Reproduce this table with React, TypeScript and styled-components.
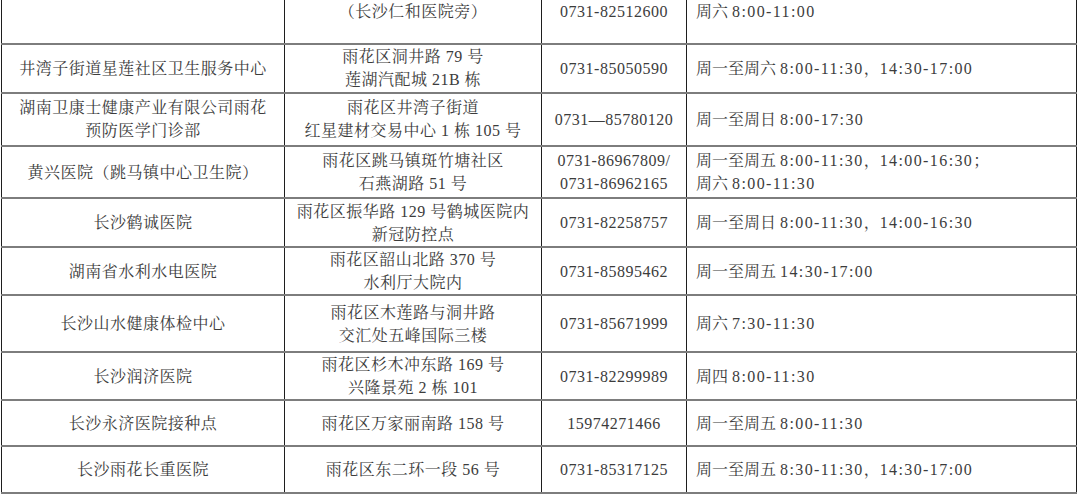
import React from "react";
import styled, { createGlobalStyle } from "styled-components";

const Global = createGlobalStyle`
  html, body { margin: 0; padding: 0; background: #ffffff; }
  body { width: 1080px; height: 496px; overflow: hidden; }
`;

const Page = styled.div`
  width: 1080px;
  height: 496px;
  overflow: hidden;
  background: #ffffff;
  padding-left: 1px;
  box-sizing: border-box;
`;

const Table = styled.table`
  border-collapse: collapse;
  table-layout: fixed;
  width: 1075px;
  font-family: "Liberation Serif", "Noto Serif CJK SC", "Noto Sans CJK SC", serif;
  font-size: 16px;
  line-height: 23px;
  color: #3c3c3c;
`;

const Row = styled.tr<{ $h: number }>`
  height: ${(p) => p.$h}px;
`;

const Cell = styled.td<{ $align?: "left" | "center"; $cut?: boolean; $tight?: boolean }>`
  border-top: ${(p) => (p.$cut ? "none" : "2px solid #7d7d7d")};
  border-bottom: 2px solid #7d7d7d;
  border-left: 1.5px solid #1e1e1e;
  border-right: 1.5px solid #1e1e1e;
  text-align: ${(p) => p.$align ?? "center"};
  vertical-align: ${(p) => (p.$cut ? "top" : "middle")};
  padding: ${(p) => (p.$cut ? "0" : "0")} ${(p) => (p.$align === "left" ? "4px 0 9px" : "2px")};
  letter-spacing: ${(p) => (p.$tight ? "0" : "0.5px")};
  white-space: nowrap;
  overflow: hidden;
`;

const Num = styled.span`
  letter-spacing: 1.4px;
`;

const Line = styled.div``;

type RowData = {
  h: number;
  cut?: boolean;
  name: string[];
  addr: string[];
  phone: string[];
  hours: string[];
};

const rows: RowData[] = [
  { h: 44, cut: true, name: [], addr: ["（长沙仁和医院旁）"], phone: ["0731-82512600"], hours: ["周六 8:00-11:00"] },
  { h: 48.5, name: ["井湾子街道星莲社区卫生服务中心"], addr: ["雨花区洞井路 79 号", "莲湖汽配城 21B 栋"], phone: ["0731-85050590"], hours: ["周一至周六 8:00-11:30，14:30-17:00"] },
  { h: 53.5, name: ["湖南卫康士健康产业有限公司雨花", "预防医学门诊部"], addr: ["雨花区井湾子街道", "红星建材交易中心 1 栋 105 号"], phone: ["0731—85780120"], hours: ["周一至周日 8:00-17:30"] },
  { h: 52, name: ["黄兴医院（跳马镇中心卫生院）"], addr: ["雨花区跳马镇斑竹塘社区", "石燕湖路 51 号"], phone: ["0731-86967809/", "0731-86962165"], hours: ["周一至周五 8:00-11:30，14:00-16:30；", "周六 8:00-11:30"] },
  { h: 49, name: ["长沙鹤诚医院"], addr: ["雨花区振华路 129 号鹤城医院内", "新冠防控点"], phone: ["0731-82258757"], hours: ["周一至周日 8:00-11:30，14:00-16:30"] },
  { h: 47, name: ["湖南省水利水电医院"], addr: ["雨花区韶山北路 370 号", "水利厅大院内"], phone: ["0731-85895462"], hours: ["周一至周五 14:30-17:00"] },
  { h: 57, name: ["长沙山水健康体检中心"], addr: ["雨花区木莲路与洞井路", "交汇处五峰国际三楼"], phone: ["0731-85671999"], hours: ["周六 7:30-11:30"] },
  { h: 48, name: ["长沙润济医院"], addr: ["雨花区杉木冲东路 169 号", "兴隆景苑 2 栋 101"], phone: ["0731-82299989"], hours: ["周四 8:00-11:30"] },
  { h: 46, name: ["长沙永济医院接种点"], addr: ["雨花区万家丽南路 158 号"], phone: ["15974271466"], hours: ["周一至周五 8:00-11:30"] },
  { h: 47, name: ["长沙雨花长重医院"], addr: ["雨花区东二环一段 56 号"], phone: ["0731-85317125"], hours: ["周一至周五 8:30-11:30，14:30-17:00"] },
];

const renderHours = (text: string) =>
  text.split(/([0-9:\-]+)/).map((part, i) =>
    /^[0-9:\-]+$/.test(part) ? <Num key={i}>{part}</Num> : <React.Fragment key={i}>{part}</React.Fragment>
  );

const Lines: React.FC<{ items: string[]; hours?: boolean }> = ({ items, hours }) => (
  <>
    {items.map((t, i) => (
      <Line key={i}>{hours ? renderHours(t) : t}</Line>
    ))}
  </>
);

export default function App() {
  return (
    <Page>
      <Global />
      <Table>
        <colgroup>
          <col style={{ width: 283 }} />
          <col style={{ width: 257 }} />
          <col style={{ width: 145 }} />
          <col style={{ width: 390 }} />
        </colgroup>
        <tbody>
          {rows.map((r, i) => (
            <Row key={i} $h={r.h}>
              <Cell $cut={r.cut}>
                <Lines items={r.name} />
              </Cell>
              <Cell $cut={r.cut}>
                <Lines items={r.addr} />
              </Cell>
              <Cell $cut={r.cut}>
                <Lines items={r.phone} />
              </Cell>
              <Cell $cut={r.cut} $align="left" $tight>
                <Lines items={r.hours} hours />
              </Cell>
            </Row>
          ))}
        </tbody>
      </Table>
    </Page>
  );
}
